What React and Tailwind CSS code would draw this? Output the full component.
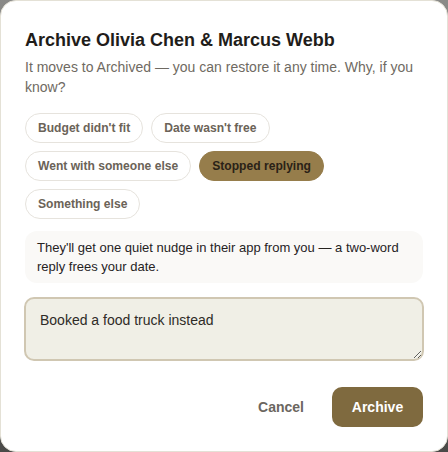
import React from "react";

const chips = [
  ["Budget didn't fit", "Date wasn't free"],
  ["Went with someone else", "Stopped replying"],
  ["Something else"],
];

export default function App() {
  return (
    <div
      className="w-[448px] h-[452px] bg-gradient-to-b from-[#8a8a88] to-[#4a4a48]"
      style={{ fontFamily: '"Liberation Sans", Arial, sans-serif' }}
    >
      <div className="h-full w-full bg-white rounded-[16px] border border-[#e4e1d6] px-6 pt-[27px] flex flex-col">
        <h2 className="text-[18px] leading-[24px] font-bold text-[#1f1d1a]">
          Archive Olivia Chen &amp; Marcus Webb
        </h2>
        <p className="mt-[5px] text-[14px] leading-[20px] text-[#6f6a62]">
          It moves to Archived — you can restore it any time. Why, if you know?
        </p>
        <div className="mt-[16px] flex flex-col gap-2">
          {chips.map((row, i) => (
            <div key={i} className="flex gap-2">
              {row.map((c) =>
                c === "Stopped replying" ? (
                  <span
                    key={c}
                    className="h-[30px] px-[12px] rounded-full bg-[#967d4b] border border-[#967d4b] text-[12.1px] font-bold text-[#2a2217] flex items-center"
                  >
                    {c}
                  </span>
                ) : (
                  <span
                    key={c}
                    className="h-[30px] px-[12px] rounded-full border border-[#e6e3dd] bg-white text-[12.1px] font-bold text-[#6b6358] flex items-center"
                  >
                    {c}
                  </span>
                )
              )}
            </div>
          ))}
        </div>
        <div className="mt-[12px] rounded-[12px] bg-[#faf9f7] px-3 py-[7px] text-[13px] leading-[19px] text-[#26231f]">
          They'll get one quiet nudge in their app from you — a two-word reply frees your date.
        </div>
        <textarea
          defaultValue="Booked a food truck instead"
          className="block mt-[14px] -mx-px h-[64px] rounded-[10px] border-2 border-[#d0c7b2] bg-[#f0efe6] px-[14px] py-[11px] text-[14px] leading-[20px] text-[#2e2b27] outline-none"
          style={{ fontFamily: '"Liberation Sans", Arial, sans-serif' }}
        />
        <div className="mt-[26px] flex justify-end items-center gap-[14px]">
          <button className="h-[40px] px-[14px] text-[14px] font-bold text-[#6b6660]">
            Cancel
          </button>
          <button className="h-[40px] w-[91px] rounded-[10px] bg-[#7f6a3f] text-[14px] font-bold text-white">
            Archive
          </button>
        </div>
      </div>
    </div>
  );
}
